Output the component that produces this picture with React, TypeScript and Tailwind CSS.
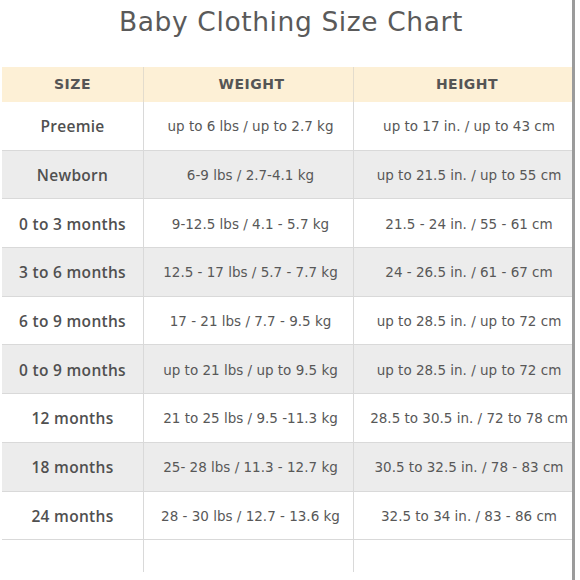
import React from "react";

const rows: [string, string, string][] = [
  ["Preemie", "up to 6 lbs / up to 2.7 kg", "up to 17 in. / up to 43 cm"],
  ["Newborn", "6-9 lbs / 2.7-4.1 kg", "up to 21.5 in. / up to 55 cm"],
  ["0 to 3 months", "9-12.5 lbs / 4.1 - 5.7 kg", "21.5 - 24 in. / 55 - 61 cm"],
  ["3 to 6 months", "12.5 - 17 lbs / 5.7 - 7.7 kg", "24 - 26.5 in. / 61 - 67 cm"],
  ["6 to 9 months", "17 - 21 lbs / 7.7 - 9.5 kg", "up to 28.5 in. / up to 72 cm"],
  ["0 to 9 months", "up to 21 lbs / up to 9.5 kg", "up to 28.5 in. / up to 72 cm"],
  ["12 months", "21 to 25 lbs / 9.5 -11.3 kg", "28.5 to 30.5 in. / 72 to 78 cm"],
  ["18 months", "25- 28 lbs / 11.3 - 12.7 kg", "30.5 to 32.5 in. / 78 - 83 cm"],
  ["24 months", "28 - 30 lbs / 12.7 - 13.6 kg", "32.5 to 34 in. / 83 - 86 cm"],
];

export default function App() {
  return (
    <div
      className="flex w-[580px] h-[580px] bg-white overflow-hidden text-[#555]"
      style={{ fontFamily: '"DejaVu Sans", sans-serif' }}
    >
      <div className="flex flex-col w-[572px]">
        <div className="h-[67px] flex justify-center pt-[4px]">
          <h1 className="text-[26.5px] leading-[36px] font-normal tracking-[0.6px] text-[#5a5a5a] pl-[10px]">
            Baby Clothing Size Chart
          </h1>
        </div>
        <div className="ml-[2px] flex flex-col">
          <div className="flex h-[35px] bg-[#fdf0d6] text-[14px] font-bold tracking-[0.5px] text-[#555]">
            <div className="w-[142px] flex items-center justify-center border-r border-[#e3dccd]">SIZE</div>
            <div className="w-[210px] flex items-center justify-center border-r border-[#e3dccd] pl-[6px]">WEIGHT</div>
            <div className="flex-1 flex items-center justify-center pl-[8px]">HEIGHT</div>
          </div>
          {rows.map((r, i) => (
            <div
              key={i}
              className={`flex h-[48.7px] border-b border-[#d9d9d9] ${i % 2 === 1 ? "bg-[#ececec]" : "bg-white"}`}
            >
              <div
                className="w-[142px] flex items-center justify-center border-r border-[#d9d9d9] text-[15.5px] font-semibold text-[#505050] tracking-[0.3px] pt-[2px]"
                style={{ fontFamily: '"Open Sans", sans-serif' }}
              >
                {r[0]}
              </div>
              <div className="w-[210px] flex items-center justify-center border-r border-[#d9d9d9] text-[13.5px] text-[#585858] pl-[4px] pt-[1px]">
                {r[1]}
              </div>
              <div className="flex-1 flex items-center justify-center text-[13.5px] text-[#585858] pl-[12px] pt-[1px]">
                {r[2]}
              </div>
            </div>
          ))}
          <div className="flex h-[32px]">
            <div className="w-[142px] border-r border-[#d9d9d9]" />
            <div className="w-[210px] border-r border-[#d9d9d9]" />
            <div className="flex-1" />
          </div>
        </div>
      </div>
      <div className="w-[3px] h-[580px] bg-[#9b9b9b]" />
      <div className="flex-1" />
    </div>
  );
}
